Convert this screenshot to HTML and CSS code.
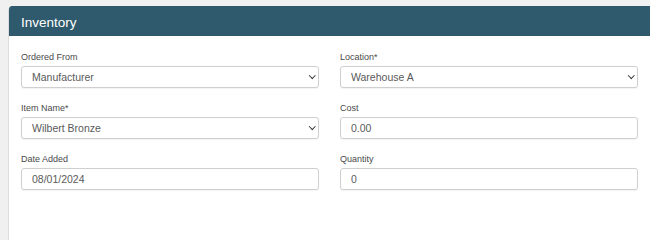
FILE: index.html
```html
<!DOCTYPE html>
<html lang="en">
<head>
<meta charset="utf-8">
<title>Inventory</title>
<link rel="stylesheet" href="styles.css">
</head>
<body>
<section class="card">
  <header class="card-header">Inventory</header>
  <form class="card-body">
    <div class="field">
      <label class="field-label" for="ordered">Ordered From</label>
      <div class="select-wrap">
        <select id="ordered" class="control select"><option>Manufacturer</option></select>
      </div>
    </div>
    <div class="field">
      <label class="field-label" for="location">Location*</label>
      <div class="select-wrap">
        <select id="location" class="control select"><option>Warehouse A</option></select>
      </div>
    </div>
    <div class="field">
      <label class="field-label" for="item">Item Name*</label>
      <div class="select-wrap">
        <select id="item" class="control select"><option>Wilbert Bronze</option></select>
      </div>
    </div>
    <div class="field">
      <label class="field-label" for="cost">Cost</label>
      <input id="cost" class="control input" type="text" value="0.00">
    </div>
    <div class="field">
      <label class="field-label" for="date">Date Added</label>
      <input id="date" class="control input" type="text" value="08/01/2024">
    </div>
    <div class="field">
      <label class="field-label" for="qty">Quantity</label>
      <input id="qty" class="control input" type="text" value="0">
    </div>
  </form>
</section>
</body>
</html>
```

FILE: styles.css
```css
html, body {
  margin: 0;
  padding: 0;
  height: 100%;
  overflow: hidden;
}

body {
  box-sizing: border-box;
  background: #f0f0f0;
  font-family: "Liberation Sans", Arial, sans-serif;
  padding: 6px 0 0 8px;
}

.card {
  box-sizing: border-box;
  width: 660px;
  height: 100%;
  background: #ffffff;
  border-left: 1px solid #dcdcdc;
  border-radius: 4px 4px 0 0;
  overflow: hidden;
}

.card-header {
  box-sizing: border-box;
  height: 30px;
  padding: 4px 0 0 12px;
  background: #2f5a6d;
  color: #ffffff;
  font-size: 13.5px;
  line-height: 26px;
}

.card-body {
  display: grid;
  grid-template-columns: 298px 298px;
  column-gap: 21px;
  row-gap: 14px;
  padding: 15px 0 0 12px;
  margin: 0;
}

.field {
  display: flex;
  flex-direction: column;
}

.field-label {
  font-size: 9px;
  line-height: 12px;
  color: #4a4a4a;
  margin-bottom: 3px;
}

.control {
  box-sizing: border-box;
  width: 100%;
  height: 22px;
  margin: 0;
  border: 1px solid #cfcfcf;
  border-radius: 3px;
  background: #ffffff;
  box-shadow: 0 1px 1px rgba(0, 0, 0, 0.05);
  font-family: "Liberation Sans", Arial, sans-serif;
  font-size: 10.5px;
  color: #5a5a5a;
  outline: none;
}

.input {
  padding: 0 9px 0 10px;
}

.select {
  -webkit-appearance: none;
  appearance: none;
  padding: 0 20px 0 10px;
}

.select-wrap {
  position: relative;
}

.select-wrap::after {
  content: "";
  position: absolute;
  box-sizing: border-box;
  right: 5px;
  top: 7px;
  width: 4.5px;
  height: 4.5px;
  border-right: 1.6px solid #333333;
  border-bottom: 1.6px solid #333333;
  transform: rotate(45deg);
  pointer-events: none;
}
```
